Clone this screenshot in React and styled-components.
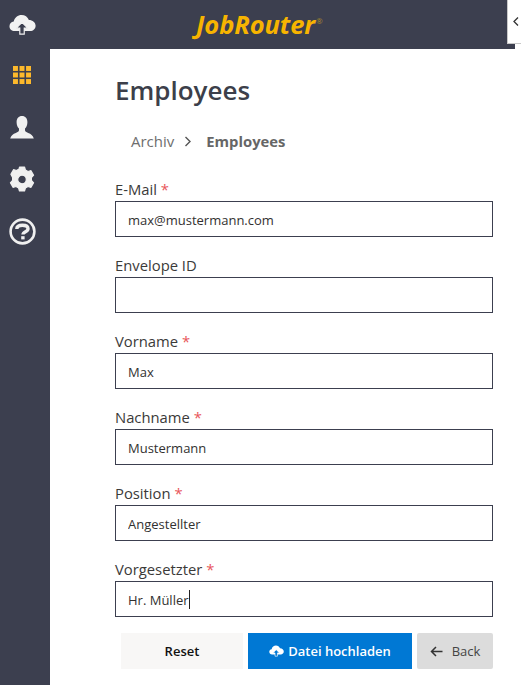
import styled, { createGlobalStyle } from "styled-components";

const GlobalStyle = createGlobalStyle`
  html, body {
    margin: 0;
    padding: 0;
    background: #fff;
    font-family: "Open Sans", "Noto Sans", sans-serif;
  }
  * {
    box-sizing: border-box;
  }
`;

const Page = styled.div`
  position: relative;
  width: 521px;
  height: 685px;
  overflow: hidden;
  display: flex;
  flex-direction: column;
`;

const Header = styled.header`
  width: 515px;
  height: 49px;
  flex: none;
  background: #3c3f4f;
  display: flex;
  align-items: center;
`;

const HeaderIcon = styled.div`
  width: 44px;
  display: flex;
  justify-content: center;
`;

const Logo = styled.div`
  margin: -2px 0 0 152px;
  display: flex;
  align-items: flex-start;
  color: #f7b400;
  font-family: "Open Sans", sans-serif;
  font-weight: 700;
  font-style: italic;
  font-size: 25.5px;
  letter-spacing: -0.1px;
  line-height: 34px;
`;

const Registered = styled.span`
  font-size: 8px;
  line-height: 8px;
  margin: 10px 0 0 1px;
  font-style: normal;
  font-weight: 400;
  color: #a98a2a;
`;

const Toggle = styled.div`
  position: absolute;
  top: 0;
  right: 0;
  width: 14px;
  height: 44px;
  background: #fff;
  border-left: 1px solid #c8c8c8;
  border-bottom: 1px solid #c8c8c8;
  display: flex;
  align-items: center;
  padding-left: 5px;
`;

const Body = styled.div`
  flex: 1;
  display: flex;
`;

const Sidebar = styled.nav`
  width: 50px;
  background: #3c3f4f;
  display: flex;
  flex-direction: column;
  padding-top: 11px;
  gap: 22px;
`;

const NavIcon = styled.div`
  width: 44px;
  height: 30px;
  display: flex;
  align-items: center;
  justify-content: center;
`;

const Main = styled.main`
  flex: 1;
  padding: 21px 28px 0 65px;
`;

const Title = styled.h1`
  margin: 0;
  height: 40px;
  font-size: 26px;
  line-height: 40px;
  font-weight: 600;
  color: #3c3f4a;
`;

const Breadcrumb = styled.div`
  display: flex;
  align-items: center;
  height: 24px;
  margin: 19px 0 0 16px;
  font-size: 15px;
  color: #6e6e6e;
`;

const CrumbCurrent = styled.span`
  font-weight: 700;
  font-size: 14.8px;
  color: #666;
`;

const Chevron = styled.svg`
  margin: 0 14px 0 10px;
`;

const Form = styled.form`
  margin-top: 24px;
  display: flex;
  flex-direction: column;
  gap: 16px;
`;

const Field = styled.div`
  position: relative;
  display: flex;
  flex-direction: column;
`;

const Label = styled.label`
  height: 24px;
  line-height: 24px;
  font-size: 14.8px;
  color: #3b3a39;
`;

const Required = styled.span`
  color: #e8555a;
`;

const Input = styled.input`
  width: 378px;
  height: 36px;
  border: 1px solid #3c3f4f;
  border-radius: 0;
  padding: 1px 12px 0;
  font-family: inherit;
  font-size: 13px;
  color: #323130;
  background: #fff;
  outline: none;
`;

const Caret = styled.span`
  position: absolute;
  left: 74px;
  bottom: 8px;
  width: 1px;
  height: 19px;
  background: #222;
`;

const Actions = styled.div`
  display: flex;
  gap: 5px;
  margin-left: 6px;
`;

const Button = styled.button`
  width: ${(props) => props.$width}px;
  height: 36px;
  border: 0;
  border-radius: ${(props) => props.$radius || 0}px;
  background: ${(props) => props.$bg};
  color: ${(props) => props.$color};
  font-family: inherit;
  font-size: 13px;
  font-weight: ${(props) => props.$weight || 600};
  display: flex;
  align-items: center;
  justify-content: center;
  gap: ${(props) => props.$gap || 0}px;
  padding: 0;
`;

function CloudUpload({ size = 27, arrow = "#3c3f4f", fill = "#f2f2f2" }) {
  return (
    <svg width={size} height={size * 0.8} viewBox="0 0 28 22">
      <path
        fill={fill}
        d="M6 17.5C2.6 17.5 0.5 15.2 0.5 12.4 0.5 9.8 2.3 7.8 4.9 7.5 5.9 3.4 9.1 0.8 13 0.8c3.5 0 6.4 2 7.6 5.2 3.9 0 7 2.8 7 6 0 3.2-2.6 5.5-5.6 5.5z"
      />
      <path
        fill={arrow}
        stroke={fill}
        strokeWidth="1.2"
        d="M13.5 8.5l-6 6h3.7v6.2h4.6v-6.2h3.7z"
      />
    </svg>
  );
}

function GridIcon() {
  const cells = [];
  for (let row = 0; row < 3; row++) {
    for (let col = 0; col < 3; col++) {
      cells.push(<rect key={`${row}-${col}`} x={col * 6.6} y={row * 6.6} width="5" height="5" />);
    }
  }
  return (
    <svg width="18" height="18" viewBox="0 0 18.2 18.2" fill="#fdb92c">
      {cells}
    </svg>
  );
}

function UserIcon() {
  return (
    <svg width="24" height="23" viewBox="0 0 24 23">
      <path
        fill="#f0f0f0"
        d="M12 0c3.4 0 5.4 2.5 5.4 6.2 0 2.8-1 5-2.4 6.4v1.7c0 1.1 1.2 1.9 3.2 2.7 2.6 1 4.8 2.2 5.6 5.5H.2c.8-3.3 3-4.5 5.6-5.5 2-.8 3.2-1.6 3.2-2.7v-1.7C7.6 11.2 6.6 9 6.6 6.2 6.6 2.5 8.6 0 12 0z"
      />
    </svg>
  );
}

function GearIcon() {
  return (
    <svg width="26" height="27" viewBox="0 0 26 27">
      <path
        fill="#f0f0f0"
        fillRule="evenodd"
        stroke="#f0f0f0"
        strokeWidth="1.2"
        strokeLinejoin="round"
        d="M10.5 1h5l0.9 3 2.6 1.5 3-0.8 2.6 4.5-2.2 2.3v3l2.2 2.3-2.6 4.5-3-0.8-2.6 1.5-0.9 3h-5l-0.9-3-2.6-1.5-3 0.8-2.6-4.5 2.2-2.3v-3L1.9 8.2l2.6-4.5 3 0.8 2.6-1.5z M13 9.2a4.3 4.3 0 1 0 0 8.6 4.3 4.3 0 1 0 0-8.6z"
      />
    </svg>
  );
}

function HelpIcon() {
  return (
    <svg width="27" height="27" viewBox="0 0 27 27">
      <circle cx="13.5" cy="13.5" r="11.9" fill="none" stroke="#f0f0f0" strokeWidth="2.6" />
      <path
        fill="none"
        stroke="#f0f0f0"
        strokeWidth="3.4"
        d="M7.8 11c0-2.6 2.4-3.8 5.7-3.8 3.3 0 5.5 1.4 5.5 3.6 0 3.2-5 2.6-5 5.8"
      />
      <rect x="12.2" y="18.2" width="3.4" height="3.2" fill="#f0f0f0" />
    </svg>
  );
}

const fields = [
  { label: "E-Mail", value: "max@mustermann.com", required: true },
  { label: "Envelope ID", value: "" },
  { label: "Vorname", value: "Max", required: true },
  { label: "Nachname", value: "Mustermann", required: true },
  { label: "Position", value: "Angestellter", required: true },
  { label: "Vorgesetzter", value: "Hr. Müller", required: true, active: true },
];

function App() {
  return (
    <Page>
      <GlobalStyle />
      <Header>
        <HeaderIcon>
          <CloudUpload />
        </HeaderIcon>
        <Logo>
          JobRouter<Registered>®</Registered>
        </Logo>
      </Header>
      <Toggle>
        <svg width="6" height="9" viewBox="0 0 6 9">
          <path d="M5 0.5L1 4.5l4 4" fill="none" stroke="#333" strokeWidth="1.3" />
        </svg>
      </Toggle>
      <Body>
        <Sidebar>
          <NavIcon>
            <GridIcon />
          </NavIcon>
          <NavIcon>
            <UserIcon />
          </NavIcon>
          <NavIcon>
            <GearIcon />
          </NavIcon>
          <NavIcon>
            <HelpIcon />
          </NavIcon>
        </Sidebar>
        <Main>
          <Title>Employees</Title>
          <Breadcrumb>
            Archiv
            <Chevron width="8" height="11" viewBox="0 0 8 11">
              <path d="M1.5 1l4.5 4.5L1.5 10" fill="none" stroke="#555" strokeWidth="1.4" />
            </Chevron>
            <CrumbCurrent>Employees</CrumbCurrent>
          </Breadcrumb>
          <Form>
            {fields.map((field) => (
              <Field key={field.label}>
                <Label>
                  {field.label} {field.required && <Required>*</Required>}
                </Label>
                <Input defaultValue={field.value} />
                {field.active && <Caret />}
              </Field>
            ))}
            <Actions>
              <Button type="button" $width={122} $bg="#f8f7f6" $color="#111">
                Reset
              </Button>
              <Button type="button" $width={164} $bg="#0078d4" $color="#fff" $gap={4}>
                <CloudUpload size={15} arrow="#0078d4" fill="#fff" />
                Datei hochladen
              </Button>
              <Button
                type="button"
                $width={76}
                $bg="#dcdcdc"
                $color="#444"
                $radius={2}
                $weight={400}
                $gap={9}
              >
                <svg width="13" height="11" viewBox="0 0 13 11">
                  <path d="M12.5 5.5H1.5M6 1L1.5 5.5 6 10" fill="none" stroke="#333" strokeWidth="1.5" />
                </svg>
                Back
              </Button>
            </Actions>
          </Form>
        </Main>
      </Body>
    </Page>
  );
}

export default App;
